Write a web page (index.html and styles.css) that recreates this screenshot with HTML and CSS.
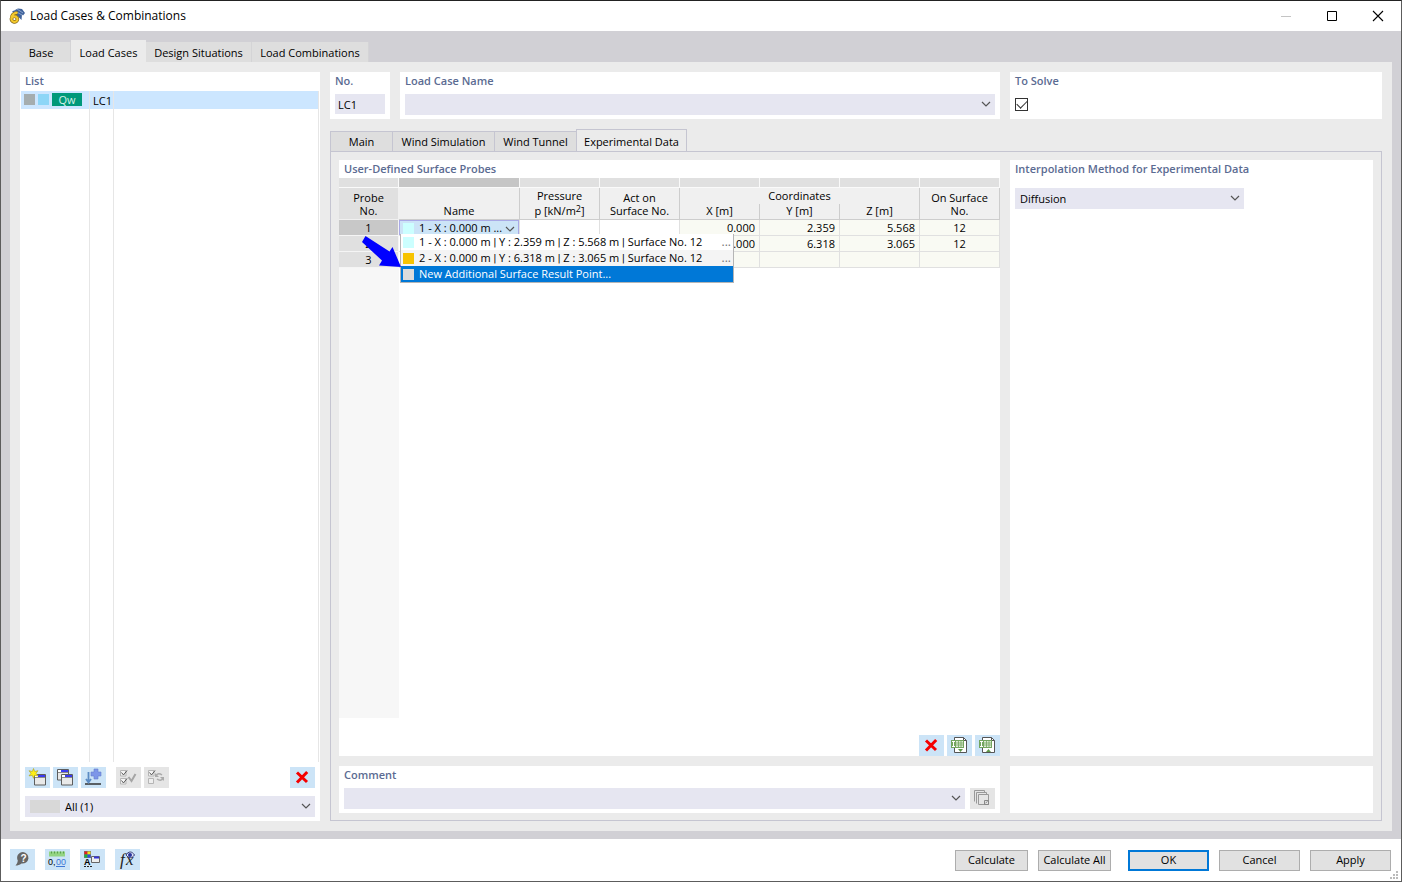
FILE: index.html
```html
<!DOCTYPE html>
<html lang="en">
<head>
<meta charset="utf-8">
<title>Load Cases &amp; Combinations</title>
<link rel="stylesheet" href="styles.css">
</head>
<body>
<svg class="defs" aria-hidden="true">
  <symbol id="chevron" viewBox="0 0 10 6"><path d="M1 1l4 4 4-4" fill="none" stroke="#555" stroke-width="1.2"/></symbol>
  <symbol id="cross" viewBox="0 0 25 21"><path d="M7 5.500l10 9.500M17.200 5L7 15.500" fill="none" stroke="#f50000" stroke-width="3"/></symbol>
  <symbol id="tick" viewBox="0 0 8 7"><path d="M.5.5h5.500v5.500H.5z" fill="#f4f4f4" stroke="#b5b5b5"/><path d="M1.500 2.500l2 2.500L7 .5" fill="none" stroke="#555"/></symbol>
  <symbol id="pane" viewBox="0 0 12 12"><path d="M.5.500h11v10.500H.5z" fill="#e9e9e9" stroke="#5d5d5d"/><path d="M1 2h3" stroke="#fff" stroke-width="2"/><path d="M4 2h7" stroke="#3a3af0" stroke-width="2"/><path d="M1 3.500h10" stroke="#8a8a8a"/></symbol>
  <symbol id="sheet" viewBox="0 0 25 21">
    <path d="M7.500 2.500h9l3 3v12h-12z" fill="#fff" stroke="#555"/><path d="M16.500 2.500v3h3" fill="none" stroke="#555"/>
    <path d="M4 5h13v8H4z" fill="#73a55f"/><path d="M9 6h7v6H9z" fill="#dcebd5"/><path d="M9 8h7M9 10h7M11.500 6v6M14 6v6" stroke="#73a55f" stroke-width=".8"/>
    <path d="M5 6.500h3M5 11.500h3M6.500 6.500v5" stroke="#fff"/>
  </symbol>
</svg>
<div class="window">
  <header class="titlebar">
    <svg class="app-icon" viewBox="0 0 16 16" aria-hidden="true"><path d="M3 3.500L9 .5l4 .5 3 4-2 2.500-1-1-.5 5.500-3-3z" fill="#3f629b"/><path d="M5 2.500l8 4.500M8 1l6 4" stroke="#9db4d8" stroke-width=".8"/><path d="M8.500 5C5 4.500 2.500 7 2.500 10.500a3 2.800 0 1 0 3-2.200c-1.500 0-2.500.7-3 2" fill="none" stroke="#85681a" stroke-width="3.600"/><path d="M8.500 5C5 4.500 2.500 7 2.500 10.500a3 2.800 0 1 0 3-2.200c-1.500 0-2.500.7-3 2" fill="none" stroke="#f4c92c" stroke-width="2.200"/></svg>
    <h1>Load Cases &amp; Combinations</h1>
    <button class="sys" aria-label="Minimize" disabled><svg viewBox="0 0 12 12"><path d="M1 6.500h10" stroke="#c4c4c4"/></svg></button>
    <button class="sys" aria-label="Maximize"><svg viewBox="0 0 12 12"><path d="M1.500 1.500h9v9h-9z" fill="none" stroke="#000"/></svg></button>
    <button class="sys" aria-label="Close"><svg viewBox="0 0 12 12"><path d="M1 1l10 10M11 1L1 11" stroke="#000" stroke-width="1.100"/></svg></button>
  </header>

  <div class="workspace">
    <nav class="tabs" role="tablist">
      <button class="tab tab-base" role="tab">Base</button>
      <button class="tab tab-cases active" role="tab" aria-selected="true">Load Cases</button>
      <button class="tab tab-design" role="tab">Design Situations</button>
      <button class="tab tab-comb" role="tab">Load Combinations</button>
    </nav>
    <main class="page">
      <aside class="card list-card">
        <h2>List</h2>
        <div class="list">
          <div class="list-row"><span class="list-tags"><i class="tag gray"></i><i class="tag sky"></i><b class="badge">Qw</b></span><span class="list-no">LC1</span><span class="list-name"></span></div>
          <div class="list-rest"><span class="list-tags"></span><span class="list-no"></span><span class="list-name"></span></div>
        </div>
        <div class="toolbar">
          <button class="icon" aria-label="New"><svg viewBox="0 0 25 21"><use href="#pane" x="9" y="7" width="12" height="12"/><path d="M8.500 1.500l1.200 3 3.300-.8-2 2.600 2 2.600-3.300-.6-1.200 3-1.200-3-3.300.6 2-2.600-2-2.600 3.300.8z" fill="#ffef16" stroke="#a89d20" stroke-width=".6"/></svg></button>
          <button class="icon" aria-label="Copy"><svg viewBox="0 0 25 21"><use href="#pane" x="4" y="2" width="12" height="12"/><use href="#pane" x="8" y="7" width="12" height="12"/></svg></button>
          <button class="icon" aria-label="Add load"><svg viewBox="0 0 25 21"><path d="M4 17h16" stroke="#333" stroke-width="1.500"/><path d="M7.500 5v10M5 12l2.500 3.500L10 12" fill="none" stroke="#5b8bc4" stroke-width="1.800"/><path d="M13 2h4v3h3v4h-3v3h-4V9h-3V5h3z" fill="#7d96e8" stroke="#657dce" stroke-width=".6"/></svg></button>
          <button class="icon off first-off" aria-label="Select all" disabled><svg viewBox="0 0 25 21"><use href="#tick" x="4" y="3" width="8" height="7"/><use href="#tick" x="4" y="11" width="8" height="7"/><path d="M12.500 10l3 4 4-7" fill="none" stroke="#a5a5a5" stroke-width="2"/></svg></button>
          <button class="icon off" aria-label="Invert selection" disabled><svg viewBox="0 0 25 21"><use href="#tick" x="4" y="3" width="8" height="7"/><path d="M4.500 11.500h5v5h-5z" fill="#eee" stroke="#b5b5b5"/><path d="M12 9c1-3 4-2.500 6-1M19 11c-1 3-4 2.500-6 1" fill="none" stroke="#aaa" stroke-width="1.500"/><path d="M11 6v4h4zM20 14v-4h-4z" fill="#aaa"/></svg></button>
          <button class="icon push" aria-label="Delete"><svg><use href="#cross"/></svg></button>
        </div>
        <div class="field has-swatch"><i class="filter-swatch"></i><select aria-label="Filter"><option>All (1)</option></select><svg class="chev"><use href="#chevron"/></svg></div>
      </aside>

      <div class="details">
        <div class="summary">
          <section class="card"><h2><label for="no">No.</label></h2><div class="card-body"><input id="no" class="text" value="LC1"></div></section>
          <section class="card"><h2><label for="name">Load Case Name</label></h2><div class="card-body"><div class="field"><select id="name"><option></option></select><svg class="chev"><use href="#chevron"/></svg></div></div></section>
          <section class="card"><h2><label for="solve">To Solve</label></h2><div class="card-body"><input id="solve" class="check" type="checkbox" checked></div></section>
        </div>

        <nav class="subtabs" role="tablist">
          <button class="subtab sub-main" role="tab">Main</button>
          <button class="subtab sub-sim" role="tab">Wind Simulation</button>
          <button class="subtab sub-tunnel" role="tab">Wind Tunnel</button>
          <button class="subtab sub-exp active" role="tab" aria-selected="true">Experimental Data</button>
        </nav>
        <div class="subpage">
          <section class="card probes">
            <h2>User-Defined Surface Probes</h2>
            <div class="table-area">
            <table>
              <colgroup><col class="c-no"><col class="c-name"><col><col><col><col><col><col></colgroup>
              <thead>
                <tr class="band"><td></td><td class="current"></td><td></td><td></td><td></td><td></td><td></td><td></td></tr>
                <tr><th rowspan="2" class="rowhead">Probe<br>No.</th><th rowspan="2">Name</th><th class="upper">Pressure</th><th rowspan="2">Act on<br>Surface No.</th><th colspan="3" class="upper group">Coordinates</th><th rowspan="2">On Surface<br>No.</th></tr>
                <tr><th>p [kN/m<sup>2</sup>]</th><th>X [m]</th><th>Y [m]</th><th>Z [m]</th></tr>
              </thead>
              <tbody>
                <tr><th class="rowhead current">1</th>
                  <td class="name-cell">
                    <div class="combo"><i class="swatch cyan"></i><select aria-label="Probe name"><option>1 - X : 0.000 m ...</option></select><svg class="chev"><use href="#chevron"/></svg></div>
                    <ul class="popup" role="listbox">
                      <li role="option"><i class="swatch cyan"></i><span>1 - X : 0.000 m <b>|</b> Y : 2.359 m <b>|</b> Z : 5.568 m <b>|</b> Surface No. 12</span><button aria-label="Edit point 1">...</button></li>
                      <li role="option" class="alt"><i class="swatch amber"></i><span>2 - X : 0.000 m <b>|</b> Y : 6.318 m <b>|</b> Z : 3.065 m <b>|</b> Surface No. 12</span><button aria-label="Edit point 2">...</button></li>
                      <li role="option" class="chosen" aria-selected="true"><i class="swatch pale"></i><span>New Additional Surface Result Point...</span></li>
                    </ul>
                    <svg class="pointer" viewBox="0 0 40 33" aria-hidden="true"><path d="M4.500 1l24 15.500 3-4.500L40 32 18 30.500l3-5L1 7z" fill="#0000ff"/></svg>
                  </td>
                  <td></td><td></td><td class="num ro">0.000</td><td class="num ro">2.359</td><td class="num ro">5.568</td><td class="mid ro">12</td></tr>
                <tr><th class="rowhead">2</th><td></td><td></td><td></td><td class="num ro">0.000</td><td class="num ro">6.318</td><td class="num ro">3.065</td><td class="mid ro">12</td></tr>
                <tr><th class="rowhead">3</th><td></td><td></td><td></td><td class="ro"></td><td class="ro"></td><td class="ro"></td><td class="ro"></td></tr>
              </tbody>
            </table>
            <div class="gutter"></div>
            </div>
            <div class="toolbar end">
              <button class="icon" aria-label="Delete probe"><svg><use href="#cross"/></svg></button>
              <button class="icon" aria-label="Export table"><svg viewBox="0 0 25 21"><use href="#sheet"/><path d="M11 14h5l-2.500 3z" fill="#5d9848"/></svg></button>
              <button class="icon" aria-label="Import table"><svg viewBox="0 0 25 21"><use href="#sheet"/><path d="M11 17h5l-2.500-3z" fill="#5d9848"/></svg></button>
            </div>
          </section>
          <section class="card">
            <h2><label for="method">Interpolation Method for Experimental Data</label></h2>
            <div class="card-body method"><div class="field"><select id="method"><option>Diffusion</option></select><svg class="chev"><use href="#chevron"/></svg></div></div>
          </section>
          <section class="card">
            <h2><label for="comment">Comment</label></h2>
            <div class="card-body inline"><div class="field"><select id="comment"><option></option></select><svg class="chev"><use href="#chevron"/></svg></div>
            <button class="icon off" aria-label="Comment templates" disabled><svg viewBox="0 0 25 21"><path d="M4.500 13.500v-11h10v2M6.500 15.500v-11h10v2M8.500 6.500h10v10h-10z" fill="none" stroke="#999"/><path d="M14.500 12.500h4v4h-4z" fill="none" stroke="#888"/><path d="M15.500 15l2-1.500" stroke="#888"/></svg></button></div>
          </section>
          <section class="card"></section>
        </div>
      </div>
    </main>
  </div>

  <footer class="footer">
    <div class="tools">
      <button class="icon" aria-label="Help"><svg viewBox="0 0 25 21"><path d="M13 3a6 5.800 0 1 1-1.500 11.500C9.500 16 8 16.500 5.500 16.500c1.500-1.500 2-3 2.300-5A6 5.800 0 0 1 13 3z" fill="#666"/><text x="10.500" y="12.500" class="glyph help">?</text></svg></button>
      <button class="icon" aria-label="Units and decimal places"><svg viewBox="0 0 25 21"><path d="M4 2.500h16v5H4z" fill="#93d483"/><path d="M6.500 2.500v2M9.500 2.500v2M12.500 2.500v2M15.500 2.500v2M18.500 2.500v2" stroke="#589e4d"/><text x="3" y="16" class="glyph">0,</text><text x="11" y="16" class="glyph blue">00</text><path d="M11 17.500h9" stroke="#3f77d5"/></svg></button>
      <button class="icon" aria-label="Display properties"><svg viewBox="0 0 25 21"><path d="M4 2h7v7H4z" fill="#777"/><path d="M4.500 2.500h3v3h-3z" fill="#e81e1e"/><path d="M7.500 2.500h3v3h-3z" fill="#f2e019"/><path d="M4.500 5.500h3v3h-3z" fill="#18b63c"/><path d="M7.500 5.500h3v3h-3z" fill="#2c50e2"/><text x="4" y="16" class="glyph letter">A</text><path d="M4 17.500h8" stroke="#222" stroke-dasharray="2 1"/><path d="M11.500 7.500h8v6h-8z" fill="#eee" stroke="#666"/><path d="M14 8.500h5" stroke="#3434d8" stroke-width="2"/></svg></button>
      <button class="icon" aria-label="Formulas"><svg viewBox="0 0 25 21"><text x="5" y="16" class="glyph fx">f</text><text x="11" y="16" class="glyph fx">x</text><path d="M11 6c2.500-4 6-4 8.500 0-2.500 3.500-6 3.500-8.500 0z" fill="#dfe5fa" stroke="#363d78"/><circle cx="15" cy="6" r="2" fill="#29339c"/></svg></button>
    </div>
    <div class="actions">
      <button class="btn small">Calculate</button>
      <button class="btn small">Calculate All</button>
      <button class="btn primary">OK</button>
      <button class="btn">Cancel</button>
      <button class="btn">Apply</button>
    </div>
    <svg class="grip" viewBox="0 0 9 9" aria-hidden="true"><path d="M6 0h2v2H6zM3 3h2v2H3zM6 3h2v2H6zM0 6h2v2H0zM3 6h2v2H3zM6 6h2v2H6z" fill="#bbb"/></svg>
  </footer>
</div>
</body>
</html>
```
FILE: styles.css
```css
* { box-sizing: border-box; }
body { margin: 0; font: 11px/16px "Open Sans", "Noto Sans", sans-serif; color: #000; }
h1, h2, ul { margin: 0; padding: 0; }
button, input, select { font: inherit; color: inherit; margin: 0; padding: 0; border: 0; border-radius: 0; }
svg { display: block; }
.defs { position: absolute; width: 0; height: 0; }

.window { display: flex; flex-direction: column; min-height: 100vh; border: 1px solid #5c5c5c; border-top-color: #222; background: #fff; }
.titlebar { display: flex; align-items: center; height: 30px; padding-left: 8px; }
.app-icon { width: 16px; height: 16px; margin-right: 5px; overflow: visible; }
h1 { flex: 1; font-size: 12px; font-weight: 400; }
.sys { width: 46px; height: 30px; background: none; }
.sys svg { width: 12px; height: 12px; margin: auto; }

.workspace { flex: 1; display: flex; flex-direction: column; padding: 9px 9px 8px; background: #d1d0d5; }
.tabs { display: flex; align-items: flex-end; }
.tab { height: 20px; padding-top: 2px; background: #dedede; border-right: 1px solid #d4d4d6; }
.tab.active { height: 22px; padding-top: 4px; background: #ebebeb; border: 0; }
.tab-base { width: 61px; padding-left: 2px; }
.tab-cases { width: 75px; }
.tab-design { width: 106px; }
.tab-comb { width: 117px; }

.page { flex: 1; display: flex; gap: 10px; padding: 10px; background: #ebebeb; }
.card { display: flex; flex-direction: column; min-width: 0; background: #fff; }
h2 { padding-left: 5px; font-size: 11px; line-height: 18px; font-weight: 600; color: #5b6b92; }
.card-body { padding: 4px 5px; }
.inline { display: flex; gap: 5px; }
.inline .field { flex: 1; }

.list-card { width: 300px; padding-bottom: 4px; }
.list { flex: 1; display: flex; flex-direction: column; margin: 1px 1px 5px; border-right: 1px solid #e6e6e6; }
.list-row, .list-rest { display: flex; }
.list-row { height: 18px; background: #cce6ff; }
.list-rest { flex: 1; }
.list-tags { display: flex; gap: 3px; width: 69px; padding: 2px 3px; border-right: 1px solid #e6e6e6; }
.list-no { width: 24px; padding: 2px 3px; border-right: 1px solid #e6e6e6; }
.tag { width: 11px; height: 11px; margin-top: 1px; }
.gray { background: #a5adaf; }
.sky { background: #8dd6f7; }
.badge { width: 30px; height: 13px; line-height: 13px; text-align: center; font-weight: 400; color: #d5f2e9; background: #00997a; }
.list-card .field { margin: 0 5px; }
.list-card .toolbar { padding: 0 5px; margin-bottom: 8px; }
.filter-swatch { position: absolute; left: 5px; top: 4px; width: 30px; height: 13px; background: #d8d8d8; }

.toolbar { display: flex; gap: 3px; }
.toolbar.end { justify-content: flex-end; }
.icon { flex: none; width: 25px; height: 21px; background: #cce4f7; }
.icon svg { width: 25px; height: 21px; }
.icon.off { background: #e5e5e5; }
.first-off { margin-left: 7px; }
.push { margin-left: auto; }

.field { position: relative; height: 21px; background: #e6e6f1; }
.field select { display: block; width: 100%; height: 21px; padding-left: 5px; appearance: none; background: none; }
.field.has-swatch select { padding-left: 40px; }
.chev { position: absolute; right: 4px; top: 7px; width: 10px; height: 6px; pointer-events: none; }
.text { display: block; width: 100%; height: 20px; padding: 1px 3px 0; background: #e6e6f1; }
.check { display: block; position: relative; appearance: none; width: 13px; height: 13px; margin: 4px 0; border: 1px solid #333; background: #fff; }
.check:checked::after { content: ""; position: absolute; left: 1px; top: 1px; width: 9px; height: 5px; border: solid #333; border-width: 0 0 1px 1px; transform: rotate(-45deg); }

.details { flex: 1; display: flex; flex-direction: column; min-width: 0; }
.summary { display: grid; grid-template-columns: 60px 600fr 372fr; gap: 10px; margin-bottom: 10px; }
.summary .card { min-height: 47px; }
.subtabs { display: flex; align-items: flex-end; height: 23px; margin-bottom: -1px; }
.subtab { height: 21px; border: 1px solid #c5c5d1; border-right-width: 0; background: #dedede; }
.subtab.active { height: 23px; padding-top: 2px; border-width: 1px 1px 0; background: #ebebeb; }
.sub-main { width: 62px; }
.sub-sim { width: 102px; }
.sub-tunnel { width: 82px; }
.sub-exp { width: 111px; }
.subpage { flex: 1; display: grid; grid-template-columns: 661fr 363fr; grid-template-rows: 1fr 47px; gap: 10px; padding: 8px 8px 7px; border: 1px solid #c5c5d1; }
.method { padding-top: 10px; }
.method .field { max-width: 229px; }

.table-area { flex: 1; display: flex; flex-direction: column; margin-bottom: 17px; }
.gutter { flex: 1; width: 60px; background: #f7f7f7; }
table { width: 100%; table-layout: fixed; border-collapse: separate; border-spacing: 0; }
.c-no { width: 60px; }
.c-name { width: 121px; }
td, th { height: 16px; padding: 0; line-height: 15px; font-weight: 400; border: solid #e0e0e0; border-width: 0 1px 1px 0; }
.band td { height: 10px; background: #e0e0e0; border-color: #fafafa; }
.band .current { background: #c6c6c6; }
thead th { vertical-align: bottom; line-height: 13px; padding-bottom: 2px; background: #f0f0f0; border-color: #cdcdcd; }
thead .upper { border-bottom: 0; padding-bottom: 2px; }
thead .rowhead { background: #e0e0e0; border-color: #f0f0f0; }
tbody .rowhead { background: #e0e0e0; border-color: #f5f5f5; }
tbody .rowhead.current { background: #c8c8c8; }
sup { font-size: 9px; line-height: 0; vertical-align: 3px; }
.ro { background: #f9faf3; }
.num { text-align: right; padding-right: 4px; }
.mid { text-align: center; }
.name-cell { position: relative; }
.combo { position: relative; height: 15px; border: 1px solid #a9a9e6; border-bottom: 0; background: #cce4f7; }
.combo select { display: block; width: 100%; height: 14px; padding-left: 19px; line-height: 14px; appearance: none; background: none; }
.combo .swatch { position: absolute; left: 3px; top: 2px; }
.combo .chev { right: 3px; top: 5px; }
.swatch { flex: none; width: 11px; height: 11px; }
.cyan { background: #ccffff; }
.amber { background: #f7c300; }
.pale { background: #dcdcdc; }
.popup { position: absolute; z-index: 1; left: 1px; top: 14px; width: 334px; border: solid #b5b5b5; border-width: 0 1px 1px; background: #fff; list-style: none; }
.popup li { display: flex; align-items: center; gap: 5px; height: 16px; padding: 0 2px; line-height: 16px; white-space: nowrap; }
.popup span { flex: 1; }
.popup b { font-family: Roboto, sans-serif; font-weight: 400; }
.popup button { background: none; color: #777; font-size: 12px; line-height: 16px; }
.popup .alt { background: #f4f4f4; }
.popup .chosen { background: #0078d7; color: #fff; }
.pointer { position: absolute; z-index: 2; left: -38px; top: 15px; width: 40px; height: 33px; }

.footer { position: relative; display: flex; justify-content: space-between; align-items: center; height: 42px; padding: 0 10px 0 9px; }
.tools { display: flex; gap: 10px; padding-bottom: 2px; }
.actions { display: flex; gap: 10px; }
.btn { width: 81px; height: 21px; border: 1px solid #adadad; background: #e1e1e1; }
.btn.small { width: 73px; }
.btn.primary { margin-left: 7px; border: 2px solid #0078d7; }
.grip { position: absolute; right: 2px; bottom: 1px; width: 9px; height: 9px; }
.glyph { font: 9px "Liberation Sans", sans-serif; }
.help { font-weight: 700; font-size: 10px; fill: #fff; }
.letter { font-weight: 700; }
.blue { fill: #3f77d5; }
.fx { font: italic 17px "Liberation Serif", serif; fill: #222; }
```
